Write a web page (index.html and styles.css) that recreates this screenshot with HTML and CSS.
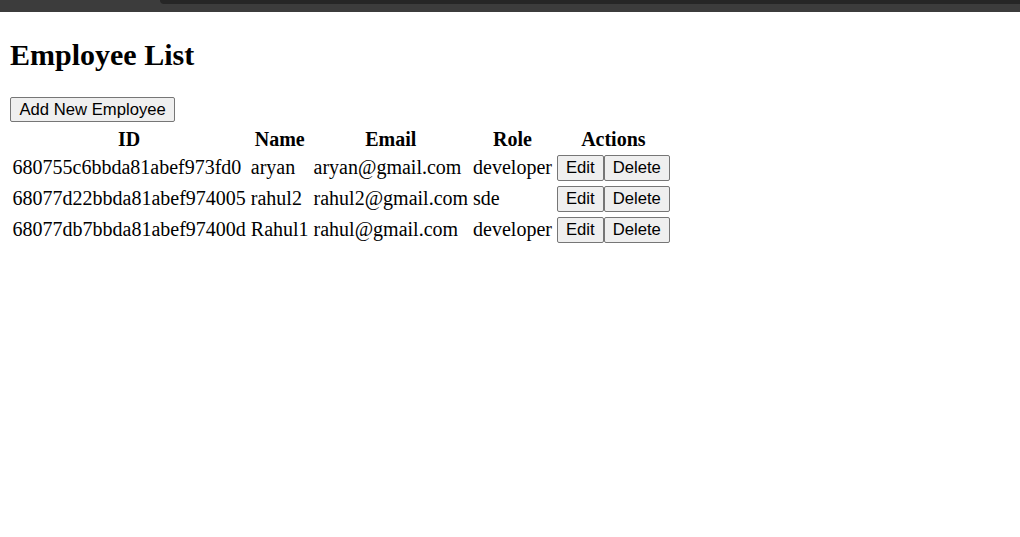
FILE: index.html
```html
<!DOCTYPE html>
<html lang="en">
<head>
<meta charset="utf-8">
<title>Employee List</title>
<link rel="stylesheet" href="styles.css">
</head>
<body>
<div class="chrome-bar"><div class="chrome-tab"></div></div>
<main class="page">
  <h1 class="title">Employee List</h1>
  <div class="toolbar"><button class="btn">Add New Employee</button></div>
  <table class="emp-table">
    <thead>
      <tr><th>ID</th><th>Name</th><th>Email</th><th>Role</th><th>Actions</th></tr>
    </thead>
    <tbody>
      <tr><td>680755c6bbda81abef973fd0</td><td>aryan</td><td>aryan@gmail.com</td><td>developer</td><td><div class="actions"><button class="btn">Edit</button><button class="btn">Delete</button></div></td></tr>
      <tr><td>68077d22bbda81abef974005</td><td>rahul2</td><td>rahul2@gmail.com</td><td>sde</td><td><div class="actions"><button class="btn">Edit</button><button class="btn">Delete</button></div></td></tr>
      <tr><td>68077db7bbda81abef97400d</td><td>Rahul1</td><td>rahul@gmail.com</td><td>developer</td><td><div class="actions"><button class="btn">Edit</button><button class="btn">Delete</button></div></td></tr>
    </tbody>
  </table>
</main>
</body>
</html>
```

FILE: styles.css
```css
html, body {
  margin: 0;
  padding: 0;
  background: #ffffff;
}

body {
  font-family: "Liberation Serif", "Times New Roman", serif;
  font-size: 20px;
  color: #000;
}

.chrome-bar {
  height: 12px;
  background: #3c3c3c;
  position: relative;
}

.chrome-tab {
  position: absolute;
  left: 160px;
  right: 0;
  top: 0;
  height: 4px;
  background: #262626;
  border-bottom-left-radius: 5px;
}

.page {
  padding: 0 10px;
}

.title {
  font-size: 30px;
  font-weight: bold;
  margin: 26px 0 0;
  line-height: 33px;
  height: 33px;
}

.toolbar {
  margin-top: 26px;
  height: 28px;
  display: flex;
  align-items: flex-start;
}

.btn {
  font-family: "Liberation Sans", Arial, sans-serif;
  font-size: 16.67px;
  line-height: 19px;
  color: #000;
  background: #efefef;
  border: 1px solid #767676;
  border-radius: 2px;
  padding: 2px 8.5px;
  margin: 0;
  height: 25px;
}

.emp-table {
  border-collapse: separate;
  border-spacing: 2.5px;
  margin-left: -1px;
}

.emp-table th,
.emp-table td {
  padding: 1px 1.5px;
  white-space: nowrap;
}

.emp-table th {
  font-weight: bold;
  text-align: center;
  line-height: 22px;
}

.emp-table td {
  text-align: left;
  line-height: 23px;
  height: 27px;
}

.actions {
  display: flex;
}

.actions .btn {
  height: 26px;
  padding: 2px 8px;
}
```
